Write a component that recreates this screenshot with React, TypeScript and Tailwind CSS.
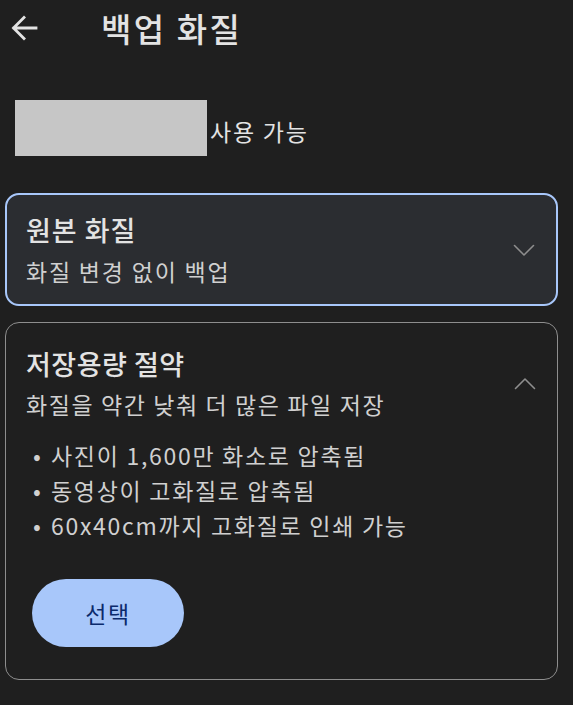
import React from 'react';

const Chevron: React.FC<{ up?: boolean }> = ({ up }) => (
  <svg className="w-[22px] h-[22px] text-[#8e8e8e]" fill="none" stroke="currentColor" viewBox="0 0 22 22">
    {up ? (
      <path strokeLinecap="round" strokeLinejoin="round" strokeWidth="1.6" d="M1.5 15.5L11 6l9.5 9.5" />
    ) : (
      <path strokeLinecap="round" strokeLinejoin="round" strokeWidth="1.6" d="M1.5 6.5L11 16l9.5-9.5" />
    )}
  </svg>
);

const bullets = ['사진이 1,600만 화소로 압축됨', '동영상이 고화질로 압축됨', '60x40cm까지 고화질로 인쇄 가능'];

const App: React.FC = () => {
  return (
    <div
      className="w-[573px] min-h-[705px] bg-[#1f1f1f] text-[#e3e3e3] flex flex-col"
      style={{ fontFamily: '"Noto Sans CJK KR", "Noto Sans", sans-serif' }}
    >
      <header className="h-[56px] flex items-center pl-[10px]">
        <svg className="w-[28px] h-[28px] text-[#e3e3e3]" fill="none" stroke="currentColor" viewBox="0 0 28 28">
          <path strokeLinecap="square" strokeWidth="2.8" d="M26 14H4M14 3.5L3.5 14 14 24.5" />
        </svg>
        <h1 className="ml-[63px] text-[33px] leading-none font-medium tracking-[2.5px]">백업 화질</h1>
      </header>

      <div className="mt-[44px] pl-[15px] flex items-center">
        <div className="w-[192px] h-[56px] bg-[#c6c6c6]" />
        <span className="ml-[3px] pt-[6px] text-[23px] leading-none tracking-[1.8px]">사용 가능</span>
      </div>

      <div className="pl-[5px] pr-[15px] mt-[37px] flex flex-col gap-[16px]">
        <div className="h-[113px] border-2 border-[#a8c7fa] rounded-[14px] bg-[#2b2d31] pl-[19px] pr-[21px] flex items-center justify-between">
          <div className="flex flex-col pt-[2px]">
            <span className="text-[27px] leading-[34px] font-medium tracking-[1px]">원본 화질</span>
            <span className="mt-[7px] text-[23px] leading-[34px] text-[#d0d0d0] tracking-[1.8px]">화질 변경 없이 백업</span>
          </div>
          <Chevron />
        </div>

        <div className="h-[358px] border-[1.5px] border-[#8e8e8e] rounded-[14px] pl-[20px] pr-[21px] pt-[24px] flex flex-col">
          <div className="flex items-center justify-between">
            <div className="flex flex-col">
              <span className="text-[27px] leading-[34px] font-medium tracking-[0.5px]">저장용량 절약</span>
              <span className="mt-[6px] text-[23px] leading-[34px] text-[#d0d0d0] tracking-[1.6px]">화질을 약간 낮춰 더 많은 파일 저장</span>
            </div>
            <Chevron up />
          </div>

          <ul className="mt-[17px] flex flex-col">
            {bullets.map((b) => (
              <li key={b} className="flex items-center text-[23px] leading-[35px] text-[#d0d0d0] tracking-[1.7px]">
                <span className="w-[25px] pl-[7px]">•</span>
                <span>{b}</span>
              </li>
            ))}
          </ul>

          <button className="mt-[36px] w-[152px] h-[68px] rounded-full bg-[#a8c7fa] text-[#0b2a6b] text-[23px] tracking-[1.5px] ml-[6px]">
            선택
          </button>
        </div>
      </div>
    </div>
  );
};

export default App;
